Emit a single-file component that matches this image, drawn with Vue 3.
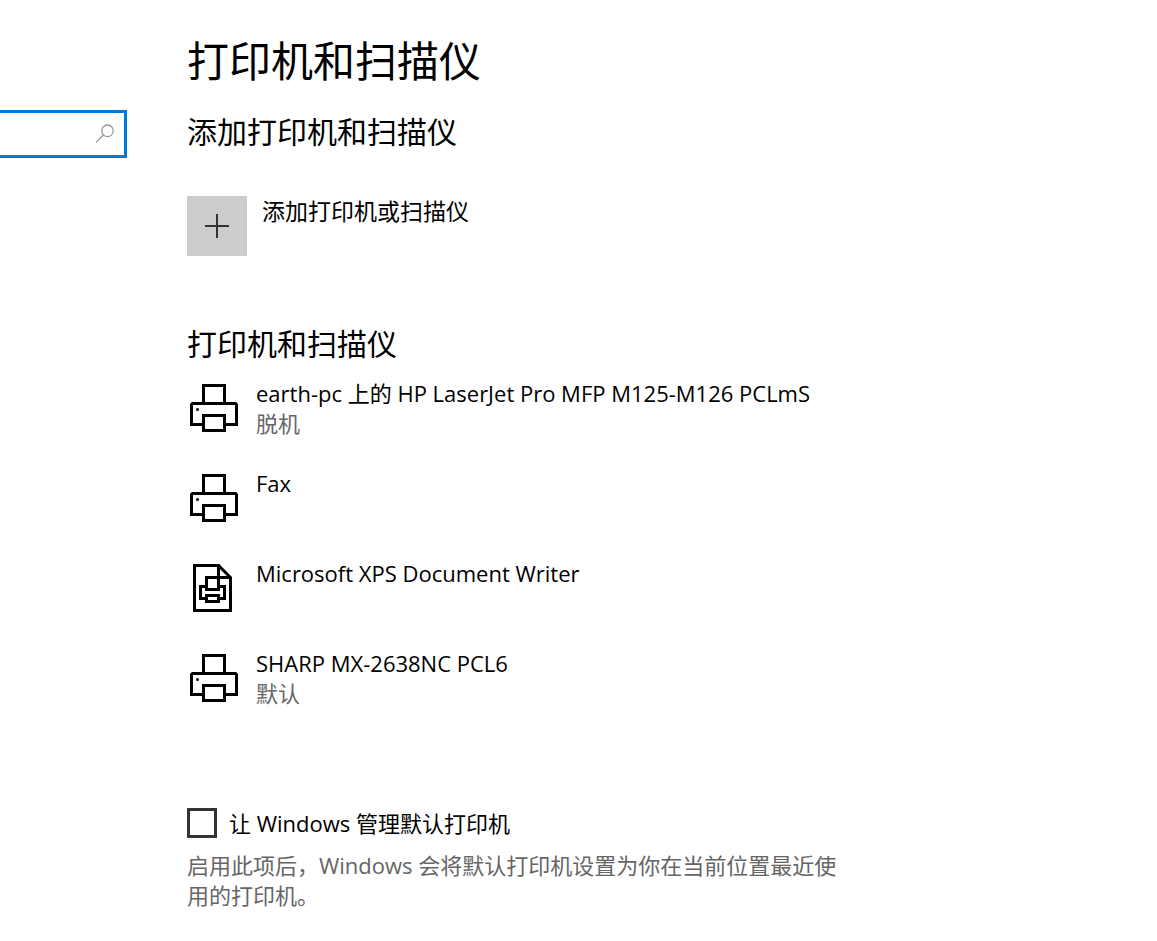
<template>
  <div class="settings">
    <aside class="sidebar">
      <form class="search" @submit.prevent>
        <input v-model="query" type="text" aria-label="查找设置" />
        <button type="submit" aria-label="搜索">
          <svg width="20" height="20" viewBox="0 0 20 20">
            <circle cx="12.5" cy="6.8" r="5.8" />
            <path d="M8.4 11 1 18.4" />
          </svg>
        </button>
      </form>
    </aside>

    <main class="content">
      <h1>打印机和扫描仪</h1>

      <section>
        <h2>添加打印机和扫描仪</h2>
        <button class="add" type="button">
          <span class="add-icon">
            <svg width="24" height="24" viewBox="0 0 24 24">
              <path d="M12 0v24M0 12h24" />
            </svg>
          </span>
          <span class="add-text">添加打印机或扫描仪</span>
        </button>
      </section>

      <section class="devices">
        <h2>打印机和扫描仪</h2>
        <ul>
          <li v-for="device in devices" :key="device.name">
            <svg v-if="device.type === 'document'" class="icon" viewBox="0 0 48 48">
              <path d="M28.5 1.5h-24v45h36v-33zM28.5 0v25.5h-12v-12h24" />
              <path d="M15 22.5h-4.5v12H15M30 22.5h4.5v12H30" />
              <path d="M16.5 31.5h12v6h-12z" />
            </svg>
            <svg v-else class="icon" viewBox="0 0 48 48">
              <path d="M13.5 19.5v-18h21v18" />
              <path d="M12 40.5H1.5v-20l1-1h43l1 1v20H36" />
              <path d="M13.5 31.5h21v15h-21z" />
              <circle cx="7.5" cy="25.5" r="1.5" />
            </svg>
            <div class="device-text">
              <span>{{ device.name }}</span>
              <span v-if="device.status" class="status">{{ device.status }}</span>
            </div>
          </li>
        </ul>
      </section>

      <section class="default-printer">
        <label>
          <input v-model="manageDefault" type="checkbox" />
          <span>让 Windows 管理默认打印机</span>
        </label>
        <p>启用此项后，Windows 会将默认打印机设置为你在当前位置最近使用的打印机。</p>
      </section>
    </main>
  </div>
</template>

<script setup>
import { ref } from 'vue'

const query = ref('')
const manageDefault = ref(false)

const devices = [
  {
    name: 'earth-pc 上的 HP LaserJet Pro MFP M125-M126 PCLmS',
    status: '脱机',
    type: 'printer'
  },
  { name: 'Fax', type: 'printer' },
  { name: 'Microsoft XPS Document Writer', type: 'document' },
  { name: 'SHARP MX-2638NC PCL6', status: '默认', type: 'printer' }
]
</script>

<style>
body {
  margin: 0;
  background: #fff;
}
</style>

<style scoped>
.settings {
  display: flex;
  font-family: 'Open Sans', 'Noto Sans CJK SC', sans-serif;
  font-size: 22px;
  line-height: 30px;
  color: #000;
}

.sidebar {
  flex: none;
  width: 127px;
  padding-top: 110px;
}

.search {
  display: flex;
  align-items: center;
  box-sizing: border-box;
  height: 48px;
  border: 3px solid #0078d7;
  border-left: none;
}

.search input {
  flex: 1;
  min-width: 0;
  padding: 0 8px;
  border: none;
  outline: none;
  font: inherit;
}

.search button {
  display: flex;
  padding: 0 9px;
  border: none;
  background: none;
}

.search svg {
  fill: none;
  stroke: #999;
  stroke-width: 1.3;
}

.content {
  flex: 1;
  min-width: 0;
  padding: 33px 60px 30px;
}

h1,
h2,
p,
ul {
  margin: 0;
  padding: 0;
  font-weight: 400;
}

h1 {
  margin-bottom: 23px;
  font-size: 42px;
  line-height: 56px;
}

h2 {
  font-size: 30px;
  line-height: 40px;
}

.add {
  display: flex;
  gap: 15px;
  margin-top: 44px;
  padding: 0;
  border: none;
  background: none;
  font: inherit;
  color: inherit;
}

.add-icon {
  display: flex;
  align-items: center;
  justify-content: center;
  width: 60px;
  height: 60px;
  background: #ccc;
}

.add-icon svg {
  stroke: #333;
  stroke-width: 2;
}

.add-text {
  font-size: 23px;
}

.devices {
  margin-top: 68px;
}

.devices ul {
  margin-top: 14px;
  list-style: none;
}

.devices li {
  display: flex;
  gap: 18px;
  min-height: 90px;
  padding-left: 3px;
}

.icon {
  flex: none;
  width: 48px;
  height: 48px;
  margin-top: 6px;
  fill: none;
  stroke: #000;
  stroke-width: 3;
}

.icon circle {
  fill: #000;
  stroke: none;
}

.device-text {
  display: flex;
  flex-direction: column;
}

.status,
.default-printer p {
  color: #666;
}

.default-printer {
  max-width: 664px;
  margin-top: 70px;
}

.default-printer label {
  display: flex;
  align-items: center;
  gap: 12px;
}

.default-printer input {
  appearance: none;
  box-sizing: border-box;
  width: 30px;
  height: 30px;
  margin: 0;
  border: 3px solid #333;
  background: #fff;
}

.default-printer input:checked {
  background: #0078d7;
}

.default-printer p {
  margin-top: 12px;
}
</style>
